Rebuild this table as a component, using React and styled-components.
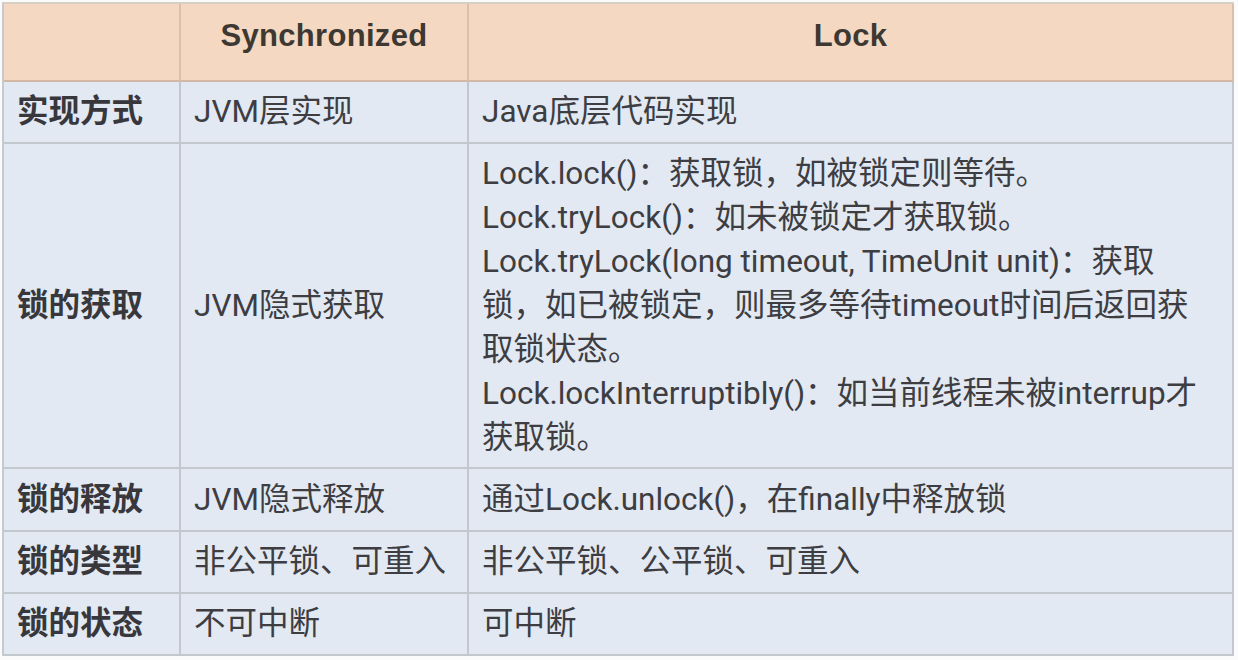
import React from 'react'
import styled, { createGlobalStyle } from 'styled-components'

const GlobalStyle = createGlobalStyle`
  html, body {
    margin: 0;
    padding: 0;
    background: #ffffff;
  }
  body {
    font-family: Roboto, 'Noto Sans CJK SC', sans-serif;
  }
`

const Page = styled.div`
  width: 1238px;
  height: 660px;
  padding: 2px 4px 0 2px;
  box-sizing: border-box;
  background: #fbfbfc;
`

const Table = styled.div`
  display: grid;
  grid-template-columns: 177px 288px 1fr;
  grid-template-rows: 78px 62px 325px 63px 62px 62px;
  border-left: 2px solid #c6c9cf;
  border-top: 2px solid #d6cfc6;
`

const HeadCell = styled.div`
  display: flex;
  align-items: center;
  justify-content: center;
  padding-bottom: 12px;
  box-sizing: border-box;
  background: #f5d8c1;
  border-right: 2px solid #d9c0ab;
  border-bottom: 2px solid #d2b8a4;
  font-family: 'Liberation Sans', Arial, sans-serif;
  font-weight: 700;
  font-size: 31px;
  letter-spacing: 0.3px;
  color: #3d3832;
`

const Cell = styled.div`
  display: flex;
  flex-direction: column;
  justify-content: center;
  padding: 0 13px;
  box-sizing: border-box;
  background: #e2e9f3;
  border-right: 2px solid #c3c7ce;
  border-bottom: 2px solid #c3c7ce;
  font-size: 31.5px;
  font-weight: ${(p) => (p.$bold ? 700 : 400)};
  line-height: 44px;
  color: ${(p) => (p.$bold ? '#38383c' : '#3d3d42')};
  white-space: nowrap;
`

const Line = styled.span`
  display: block;
`

const rows = [
  { label: '实现方式', sync: 'JVM层实现', lock: ['Java底层代码实现'] },
  {
    label: '锁的获取',
    sync: 'JVM隐式获取',
    lock: [
      'Lock.lock()：获取锁，如被锁定则等待。',
      'Lock.tryLock()：如未被锁定才获取锁。',
      'Lock.tryLock(long timeout, TimeUnit unit)：获取',
      '锁，如已被锁定，则最多等待timeout时间后返回获',
      '取锁状态。',
      'Lock.lockInterruptibly()：如当前线程未被interrup才',
      '获取锁。',
    ],
  },
  { label: '锁的释放', sync: 'JVM隐式释放', lock: ['通过Lock.unlock()，在finally中释放锁'] },
  { label: '锁的类型', sync: '非公平锁、可重入', lock: ['非公平锁、公平锁、可重入'] },
  { label: '锁的状态', sync: '不可中断', lock: ['可中断'] },
]

export default function App() {
  return (
    <Page>
      <GlobalStyle />
      <Table>
        <HeadCell />
        <HeadCell>Synchronized</HeadCell>
        <HeadCell>Lock</HeadCell>
        {rows.map((row) => (
          <React.Fragment key={row.label}>
            <Cell $bold>{row.label}</Cell>
            <Cell>{row.sync}</Cell>
            <Cell>
              {row.lock.map((text) => (
                <Line key={text}>{text}</Line>
              ))}
            </Cell>
          </React.Fragment>
        ))}
      </Table>
    </Page>
  )
}
